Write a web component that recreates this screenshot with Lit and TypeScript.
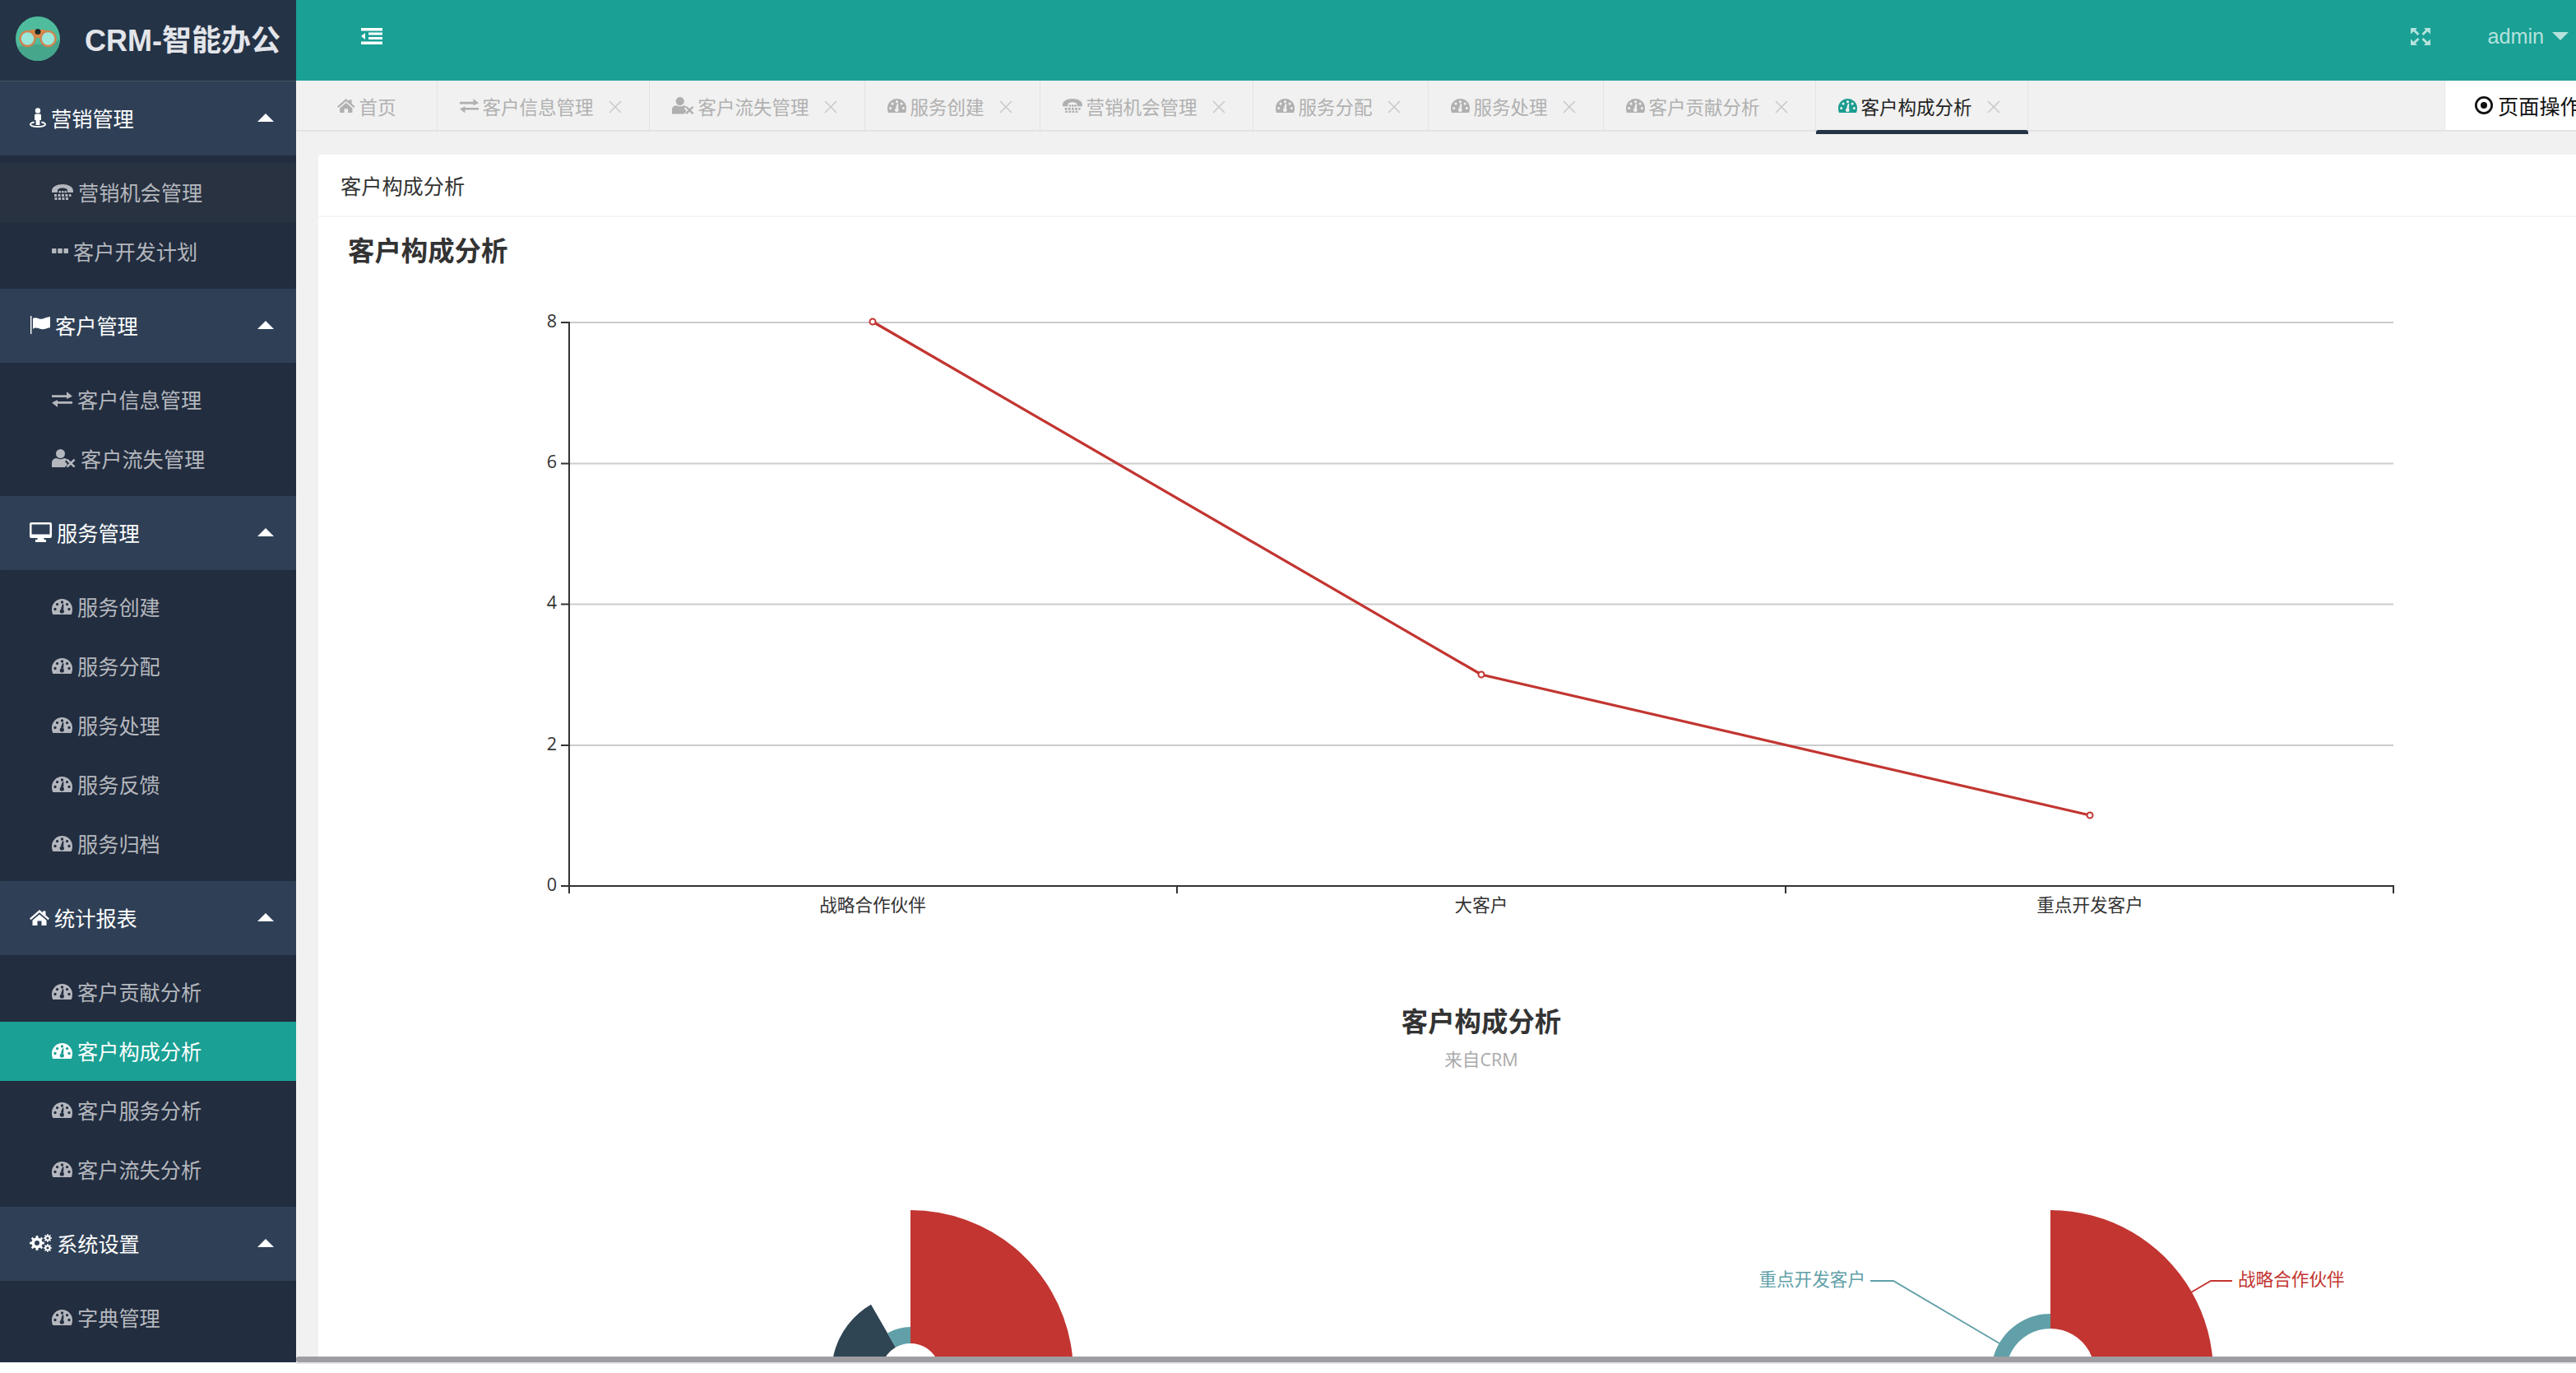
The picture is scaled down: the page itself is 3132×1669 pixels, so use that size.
import { LitElement, html, css, svg } from "lit";
import { customElement } from "lit/decorators.js";

const c = (x: number, y: number, r: number) =>
  `M${x - r} ${y}a${r} ${r} 0 1 0 ${2 * r} 0a${r} ${r} 0 1 0 ${-2 * r} 0Z`;

const gear = (cx: number, cy: number, R: number, r: number, hole: number, n: number) => {
  let d = "";
  const step = (Math.PI * 2) / n;
  for (let i = 0; i < n; i++) {
    const a = i * step;
    const pts: [number, number][] = [
      [r, a - step * 0.5],
      [r, a - step * 0.28],
      [R, a - step * 0.18],
      [R, a + step * 0.18],
      [r, a + step * 0.28],
    ];
    for (const [rad, t] of pts) {
      d += `${d ? "L" : "M"}${(cx + rad * Math.cos(t)).toFixed(2)} ${(cy + rad * Math.sin(t)).toFixed(2)}`;
    }
  }
  return d + "Z" + c(cx, cy, hole);
};

const GAUGE =
  "M1.3 19C.4 17 0 15 0 12.5A12.5 12.5 0 0 1 25 12.5C25 15 24.6 17 23.7 19Z" +
  c(4, 12.5, 1.7) + c(6.6, 6.6, 1.7) + c(12.5, 4, 1.7) + c(21, 12.5, 1.7) + c(18.6, 6.6, 1.7) +
  c(12.3, 15, 2.6) + "M10.9 12.2L13 6.2 14.4 6.6 14.2 12.8Z";

const ICONS: Record<string, { w: number; h: number; d: string }> = {
  gauge: { w: 25, h: 19, d: GAUGE },
  street: {
    w: 20, h: 24,
    d: c(10, 3.4, 3.2) +
      "M7.5 7.5h5q1.5 0 1.5 1.5v6h-1.6v6h-4.8v-6H6V9q0-1.5 1.5-1.5Z" +
      "M5.6 16.6v1.9C3.4 19 2 19.6 2 20.2 2 21.1 5.6 22 10 22s8-.9 8-1.8c0-.6-1.4-1.2-3.6-1.7v-1.9C17.8 17.2 20 18.6 20 20.2 20 22.4 15.5 24 10 24S0 22.4 0 20.2C0 18.6 2.2 17.2 5.6 16.6Z",
  },
  flag: {
    w: 25, h: 22,
    d: "M1 0h1.4v22H1ZM4 3C8 .4 12 5 16 3.6 19 2.6 21 1.5 25 1V14C20 15 18 17 14 16 10 15 7 13 4 16Z",
  },
  desktop: {
    w: 27, h: 24,
    d: "M2 0H25Q27 0 27 2V17Q27 19 25 19H17.5V21H20V24H7V21H9.5V19H2Q0 19 0 17V2Q0 0 2 0ZM2.5 2.5V14.5H24.5V2.5Z",
  },
  home: {
    w: 24, h: 19,
    d: "M12 0L16 3.5V1.5H19.5V6.5L24 10.5 22.5 12.2 12 3.2 1.5 12.2 0 10.5ZM12 5.5L20.5 12.7V19H14.5V13.5H9.5V19H3.5V12.7Z",
  },
  exchange: {
    w: 25, h: 19,
    d: "M0 4.2H18V0L25 5.7 18 9V7H0ZM7 10V12H25V14.8H7V19L0 13.5Z",
  },
  usertimes: {
    w: 29, h: 22,
    d: c(10.5, 5.5, 5.5) +
      "M0 22V17C0 13.5 2 11 6 11 8 12.5 13 12.5 15 11 16.5 11 17.5 11.5 18.5 12.5L16 15 19 18.2 15.8 22Z" +
      "M17.5 13.5L19.3 11.7 23 15.3 26.7 11.7 28.5 13.5 24.8 17.2 28.5 20.8 26.7 22.5 23 19 19.3 22.5 17.5 20.8 21.2 17.2Z",
  },
  tty: {
    w: 26, h: 19,
    d: "M0 8C0 3 6 0 13 0S26 3 26 8V10H19V7.5C19 5.5 16 4.5 13 4.5S7 5.5 7 7.5V10H0Z" +
      "M8.5 8h2.5v2.5H8.5ZM12 8h2.5v2.5H12ZM15.5 8H18v2.5h-2.5Z" +
      "M3 12h3v3H3ZM7.5 12h3v3h-3ZM12 12h3v3h-3ZM16.5 12h3v3h-3ZM21 12h2.5v3H21Z" +
      "M3.5 16h3v3h-3ZM8 16h3v3H8ZM12.5 16h3v3h-3ZM17 16h3v3h-3Z",
  },
  ellipsis: {
    w: 20, h: 6,
    d: "M1 0h3.5q1 0 1 1v4q0 1-1 1H1q-1 0-1-1V1q0-1 1-1ZM8.2 0h3.6q1 0 1 1v4q0 1-1 1H8.2q-1 0-1-1V1q0-1 1-1ZM15.5 0H19q1 0 1 1v4q0 1-1 1h-3.5q-1 0-1-1V1q0-1 1-1Z",
  },
  outdent: {
    w: 26, h: 20,
    d: "M0 0H26V3.5H0ZM9 5.5H26V8.5H9ZM9 11H26V14H9ZM0 16.5H26V20H0ZM5 6V14L0 10Z",
  },
  arrows: {
    w: 24, h: 21,
    d: "M0 0H8L5.8 2.2 10.5 7 8.5 9 3.5 4.3 0 7.5ZM24 0V7.5L20.5 4.3 15.5 9 13.5 7 18.2 2.2 16 0ZM0 21V13.5L3.5 16.7 8.5 12 10.5 14 5.8 18.8 8 21ZM24 21H16L18.2 18.8 13.5 14 15.5 12 20.5 16.7 24 13.5Z",
  },
  dot: {
    w: 22, h: 22,
    d: c(11, 11, 11) + c(11, 11, 8.3) + c(11, 11, 4),
  },
};

const ic = (name: string, scale = 1) => {
  const i = ICONS[name];
  return html`<svg class="ic" width=${i.w * scale} height=${i.h * scale} viewBox="0 0 ${i.w} ${i.h}">
    <path d=${i.d} fill-rule="evenodd"></path>
  </svg>`;
};

const GEARS =
  gear(9, 11, 9, 6.6, 3, 8) + gear(22, 5, 5, 3.6, 1.6, 8) + gear(22, 17, 5, 3.6, 1.6, 8);
ICONS.gears = { w: 27, h: 22, d: GEARS };

const sector = (cx: number, cy: number, r0: number, r1: number, a0: number, a1: number) => {
  const p = (r: number, a: number) => {
    const t = (a * Math.PI) / 180;
    return `${(cx + r * Math.sin(t)).toFixed(2)} ${(cy - r * Math.cos(t)).toFixed(2)}`;
  };
  const large = a1 - a0 > 180 ? 1 : 0;
  return `M${p(r1, a0)}A${r1} ${r1} 0 ${large} 1 ${p(r1, a1)}L${p(r0, a1)}A${r0} ${r0} 0 ${large} 0 ${p(r0, a0)}Z`;
};

interface Item { icon: string; label: string; active?: boolean; hover?: boolean; }
interface Group { icon: string; label: string; items: Item[]; }

const NAV: Group[] = [
  { icon: "street", label: "营销管理", items: [
    { icon: "tty", label: "营销机会管理", hover: true },
    { icon: "ellipsis", label: "客户开发计划" },
  ]},
  { icon: "flag", label: "客户管理", items: [
    { icon: "exchange", label: "客户信息管理" },
    { icon: "usertimes", label: "客户流失管理" },
  ]},
  { icon: "desktop", label: "服务管理", items: [
    { icon: "gauge", label: "服务创建" },
    { icon: "gauge", label: "服务分配" },
    { icon: "gauge", label: "服务处理" },
    { icon: "gauge", label: "服务反馈" },
    { icon: "gauge", label: "服务归档" },
  ]},
  { icon: "home", label: "统计报表", items: [
    { icon: "gauge", label: "客户贡献分析" },
    { icon: "gauge", label: "客户构成分析", active: true },
    { icon: "gauge", label: "客户服务分析" },
    { icon: "gauge", label: "客户流失分析" },
  ]},
  { icon: "gears", label: "系统设置", items: [
    { icon: "gauge", label: "字典管理" },
  ]},
];

const TABS = [
  { icon: "exchange", label: "客户信息管理" },
  { icon: "usertimes", label: "客户流失管理" },
  { icon: "gauge", label: "服务创建" },
  { icon: "tty", label: "营销机会管理" },
  { icon: "gauge", label: "服务分配" },
  { icon: "gauge", label: "服务处理" },
  { icon: "gauge", label: "客户贡献分析" },
  { icon: "gauge", label: "客户构成分析", active: true },
];

const TICKS = [
  { v: "8", y: 392 }, { v: "6", y: 563.5 }, { v: "4", y: 734.5 }, { v: "2", y: 906 }, { v: "0", y: 1077 },
];
const POINTS: [number, number][] = [[1061, 391], [1801, 820], [2541, 991]];
const XT = [692, 1431, 2171, 2910];
const CATS = [{ x: 1061, t: "战略合作伙伴" }, { x: 1801, t: "大客户" }, { x: 2541, t: "重点开发客户" }];

@customElement("app-root")
export class AppRoot extends LitElement {
  static styles = css`
    :host {
      display: block;
      width: 3132px;
      height: 1669px;
      background: #fff;
      overflow: hidden;
      font-family: "Liberation Sans", "Noto Sans CJK SC", sans-serif;
      font-size: 25.2px;
    }
    .ic { fill: currentColor; flex: none; display: block; }
    .app { display: flex; height: 1656px; overflow: hidden; }
    .side { width: 360px; flex: none; background: #222d3f; overflow: hidden; }
    .logo {
      box-sizing: border-box;
      height: 99px;
      background: #243346;
      border-bottom: 1px solid #47525f;
      display: flex;
      align-items: center;
      padding: 0 0 4px 19px;
      gap: 30px;
      color: #e3e5ea;
      font-size: 36px;
      font-weight: bold;
    }
    .logo span { margin-top: -2px; }
    .head {
      box-sizing: border-box;
      height: 90px;
      background: #2f4056;
      display: flex;
      align-items: center;
      padding: 0 27px 2px 36px;
      gap: 6px;
      color: #fff;
    }
    .head i {
      margin-left: auto;
      width: 0;
      height: 0;
      border-left: 10px solid transparent;
      border-right: 10px solid transparent;
      border-bottom: 10px solid #fff;
    }
    .sub { padding: 9px 0; border-radius: 5px; background: #222d3f; }
    .item {
      box-sizing: border-box;
      height: 72px;
      display: flex;
      align-items: center;
      padding: 0 0 2px 63px;
      gap: 6px;
      color: #b4b7bd;
    }
    .item.hover { background: #293241; }
    .item.active { background: #1aa094; color: #fff; }
    .main { flex: 1; min-width: 0; display: flex; flex-direction: column; background: #f1f1f1; }
    .top {
      box-sizing: border-box;
      height: 98px;
      flex: none;
      background: #1aa094;
      display: flex;
      align-items: center;
      padding: 0 9px 10px 79px;
      color: #fff;
    }
    .top .right { margin-left: auto; display: flex; align-items: center; color: #b5e2dd; }
    .top .name { margin-left: 69px; margin-right: 10px; }
    .top .caret {
      width: 0;
      height: 0;
      border-top: 10px solid #b5e2dd;
      border-left: 10px solid transparent;
      border-right: 10px solid transparent;
    }
    .tabs {
      box-sizing: border-box;
      height: 62px;
      flex: none;
      display: flex;
      border-bottom: 2px solid #e3e3e3;
      font-size: 22.5px;
      color: #b0b0b0;
      white-space: nowrap;
    }
    .tab {
      position: relative;
      display: flex;
      align-items: center;
      padding: 0 33px 2px 27px;
      gap: 5px;
      border-right: 1px solid #e3e3e3;
      height: 63px;
      box-sizing: border-box;
    }
    .tab.home { padding: 0 49px 2px 50px; }
    .tab .x { margin-left: 13px; stroke: #c9c9c9; stroke-width: 1.5; fill: none; flex: none; margin-top: 3px; }
    .tab.active { color: #222; }
    .tab.active .ic { color: #1a9c8f; }
    .tab.active::after {
      content: "";
      position: absolute;
      left: 0;
      right: -1px;
      bottom: -2px;
      height: 5px;
      background: #243346;
      border-radius: 3px 3px 0 0;
    }
    .ops {
      margin-left: auto;
      box-sizing: border-box;
      width: 160px;
      height: 62px;
      background: #fff;
      border-radius: 3px 0 0 3px;
      border-bottom: 2px solid #e3e3e3;
      border-left: 1px solid #e9e9e9;
      display: flex;
      align-items: center;
      gap: 6px;
      padding-left: 36px;
      color: #111;
      font-size: 25.2px;
      overflow: hidden;
    }
    .content { flex: 1; min-height: 0; padding: 28px 0 0 27px; overflow: hidden; }
    .card { background: #fff; border-radius: 4px 0 0 0; height: 100%; overflow: hidden; }
    .card-head {
      box-sizing: border-box;
      height: 76px;
      border-bottom: 2px solid #f6f6f6;
      display: flex;
      align-items: center;
      padding-left: 27px;
      color: #333;
    }
    .chart { display: block; }
    .chart text { font-family: "Open Sans", "Noto Sans CJK SC", sans-serif; font-size: 21.6px; fill: #333; dominant-baseline: central; }
    .chart .bold { font-family: "Liberation Sans", "Noto Sans CJK SC", sans-serif; font-size: 32.4px; font-weight: bold; }
    .chart .sub-t { fill: #aaa; }
    .chart .teal { fill: #61a0a8; }
    .chart .red { fill: #c23531; }
    .track { position: relative; height: 2px; margin-left: 360px; background: #e6e6e6; }
    .thumb { position: absolute; left: 0; right: 0; bottom: 2px; height: 7px; background: #9e9ea2; border-radius: 3px 0 0 3px; }
  `;

  private logo() {
    return html`<svg width="54" height="54" viewBox="0 0 54 54">
      <defs><clipPath id="lc"><circle cx="27" cy="27" r="27"></circle></clipPath></defs>
      <circle cx="27" cy="27" r="27" fill="#4fbc9d"></circle>
      <path d="M5 36L14 34 24 34 30 34 42 34 54 28V54H0V40Z" fill="#46a68b" clip-path="url(#lc)"></path>
      <rect x="18" y="16" width="18" height="10" fill="#d98a45"></rect>
      <circle cx="27" cy="18.5" r="3.5" fill="#1c2a2c"></circle>
      <circle cx="14.5" cy="27" r="9" fill="#9be8da" stroke="#cf8450" stroke-width="2.5"></circle>
      <circle cx="39.5" cy="27" r="9" fill="#9be8da" stroke="#cf8450" stroke-width="2.5"></circle>
    </svg>`;
  }

  private chart() {
    const line = POINTS.map((p) => p.join(",")).join(" ");
    return html`<svg class="chart" width="2745" height="1392" viewBox="387 264 2745 1392">
      ${TICKS.slice(0, 4).map(
        (t) => svg`<line x1="692" x2="2910" y1=${t.y} y2=${t.y} stroke="#ccc" stroke-width="2"></line>`,
      )}
      <line x1="692" x2="692" y1="391" y2="1085" stroke="#333" stroke-width="2"></line>
      <line x1="691" x2="2911" y1="1077" y2="1077" stroke="#333" stroke-width="2"></line>
      ${TICKS.map(
        (t) => svg`<line x1="682" x2="692" y1=${t.y} y2=${t.y} stroke="#333" stroke-width="2"></line>
          <text x="677" y=${t.y - 3} text-anchor="end">${t.v}</text>`,
      )}
      ${XT.map((x) => svg`<line x1=${x} x2=${x} y1="1077" y2="1086" stroke="#333" stroke-width="2"></line>`)}
      ${CATS.map((k) => svg`<text x=${k.x} y="1099" text-anchor="middle">${k.t}</text>`)}
      <polyline points=${line} fill="none" stroke="#c23531" stroke-width="3.2"></polyline>
      ${POINTS.map(
        (p) => svg`<circle cx=${p[0]} cy=${p[1]} r="3.5" fill="#fff" stroke="#c23531" stroke-width="2"></circle>`,
      )}
      <text class="bold" x="423" y="306">客户构成分析</text>
      <text class="bold" x="1801" y="1243" text-anchor="middle">客户构成分析</text>
      <text class="sub-t" x="1801" y="1287" text-anchor="middle">来自CRM</text>

      <path d=${sector(1107, 1669, 36, 198, 0, 240)} fill="#c23531"></path>
      <path d=${sector(1107, 1669, 36, 96, 240, 330)} fill="#2f4554"></path>
      <path d=${sector(1107, 1669, 36, 56, 330, 360)} fill="#61a0a8"></path>

      <path d=${sector(2493, 1669, 54, 198, 0, 120)} fill="#c23531"></path>
      <path d=${sector(2493, 1669, 54, 72, 120, 240)} fill="#2f4554"></path>
      <path d=${sector(2493, 1669, 54, 72, 240, 360)} fill="#61a0a8"></path>
      <polyline points="2431,1633 2302,1557 2274,1557" fill="none" stroke="#61a0a8" stroke-width="2"></polyline>
      <polyline points="2664,1571 2688,1557 2714,1557" fill="none" stroke="#c23531" stroke-width="2"></polyline>
      <text class="teal" x="2268" y="1554" text-anchor="end">重点开发客户</text>
      <text class="red" x="2721" y="1554">战略合作伙伴</text>
    </svg>`;
  }

  render() {
    return html`
      <div class="app">
        <aside class="side">
          <div class="logo">${this.logo()}<span>CRM-智能办公</span></div>
          ${NAV.map(
            (g) => html`
              <div class="head">${ic(g.icon)}<span>${g.label}</span><i></i></div>
              <div class="sub">
                ${g.items.map(
                  (it) => html`<div class="item ${it.active ? "active" : ""} ${it.hover ? "hover" : ""}">
                    ${ic(it.icon)}<span>${it.label}</span>
                  </div>`,
                )}
              </div>
            `,
          )}
        </aside>
        <div class="main">
          <header class="top">
            ${ic("outdent")}
            <div class="right">
              ${ic("arrows")}
              <span class="name">admin</span>
              <span class="caret"></span>
            </div>
          </header>
          <nav class="tabs">
            <div class="tab home">${ic("home", 0.9)}<span>首页</span></div>
            ${TABS.map(
              (t) => html`<div class="tab ${t.active ? "active" : ""}">
                ${ic(t.icon, t.icon === "usertimes" ? 0.93 : 0.92)}
                <span>${t.label}</span>
                <svg class="x" width="16" height="16" viewBox="0 0 16 16"><path d="M1 1L15 15M15 1L1 15"></path></svg>
              </div>`,
            )}
            <div class="ops">${ic("dot")}<span>页面操作</span></div>
          </nav>
          <main class="content">
            <section class="card">
              <div class="card-head">客户构成分析</div>
              ${this.chart()}
            </section>
          </main>
        </div>
      </div>
      <div class="track"><div class="thumb"></div></div>
    `;
  }
}
